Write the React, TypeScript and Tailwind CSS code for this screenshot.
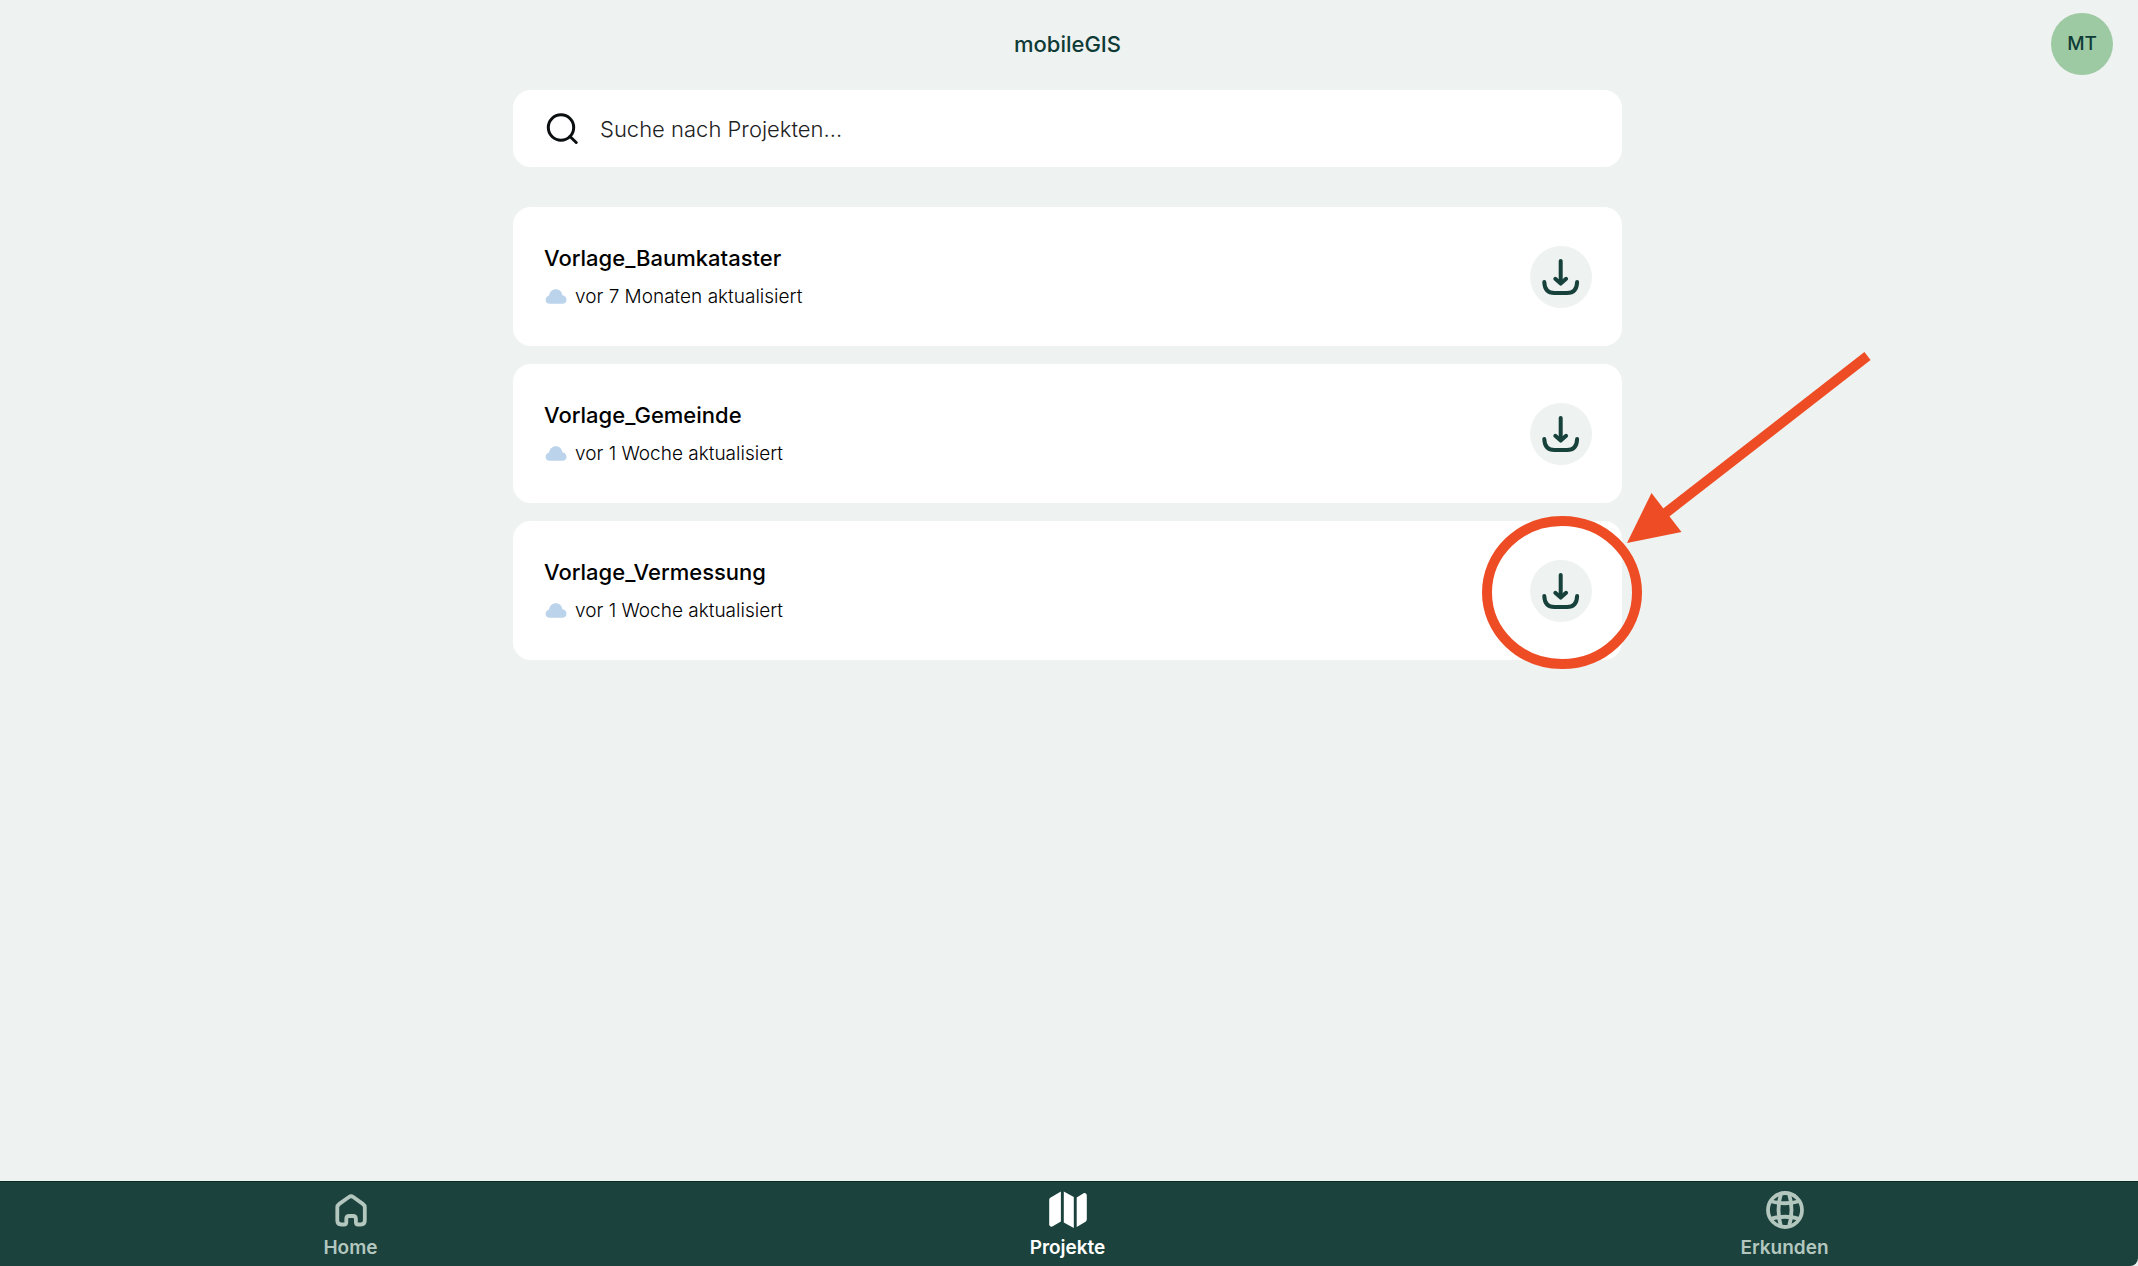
import React from "react";

type Project = { name: string; updated: string; highlighted?: boolean };

const projects: Project[] = [
  { name: "Vorlage_Baumkataster", updated: "vor 7 Monaten aktualisiert" },
  { name: "Vorlage_Gemeinde", updated: "vor 1 Woche aktualisiert" },
  { name: "Vorlage_Vermessung", updated: "vor 1 Woche aktualisiert", highlighted: true },
];

function SearchIcon() {
  return (
    <svg className="size-8 shrink-0" viewBox="0 0 32 32" fill="none" stroke="#0b0f10" strokeWidth="3" strokeLinecap="round" aria-hidden="true">
      <circle cx="15" cy="14.5" r="12.7" />
      <path d="M24 23.5 L30.2 29.5" />
    </svg>
  );
}

function CloudIcon() {
  return (
    <svg className="h-4 w-[23px] shrink-0" viewBox="-1 0 23 16" fill="#bbd3eb" aria-hidden="true">
      <path d="M4.8 14.8 C2.2 14.8 .6 13.2 .6 11 C.6 9 2 7.2 4 6.6 C4.8 2.6 7.3 .2 10.7 .2 C14 .2 16.7 2.2 17.4 6.2 C20 6.4 21.5 8.4 21.5 10.8 C21.5 13.2 19.8 14.8 17.2 14.8 Z" />
    </svg>
  );
}

function DownloadIcon() {
  return (
    <svg className="size-full" viewBox="0 0 62 62" fill="none" stroke="#17413b" strokeWidth="4" strokeLinecap="round" strokeLinejoin="round" aria-hidden="true">
      <path d="M30.7 15 V36" />
      <path d="M25.3 32.8 L30.7 37.6 L36.1 32.8" />
      <path d="M14.3 36 C14.5 43.5 18 47 24.5 47 H37 C43.5 47 46.9 43.5 47.1 36" />
    </svg>
  );
}

function HomeIcon() {
  return (
    <svg className="size-10" viewBox="0 0 40 40" fill="none" stroke="currentColor" strokeWidth="3.8" strokeLinejoin="round" aria-hidden="true">
      <path d="M6.3 17.6 C6.3 16 7 14.8 8.3 13.9 L18 7 C19.4 6 20.8 6 22.2 7 L31.8 13.9 C33.1 14.8 33.8 16 33.8 17.6 V30.5 C33.8 33 32.3 34.5 29.8 34.5 H27.2 C25.6 34.5 24.9 33.8 24.9 32.2 V28.8 C24.9 26.8 24 26 22 26 H18.2 C16.2 26 15.3 26.8 15.3 28.8 V32.2 C15.3 33.8 14.6 34.5 13 34.5 H10.3 C7.8 34.5 6.3 33 6.3 30.5 Z" />
    </svg>
  );
}

function MapIcon() {
  return (
    <svg className="size-10" viewBox="0 0 40 40" fill="currentColor" aria-hidden="true">
      <path d="M12.9 1.5 V31.5 L4.8 36.3 C3 37.2 1.2 36.3 1.2 34.2 V10 C1.2 8.8 1.7 8 2.7 7.4 Z" />
      <path d="M15.8 1.5 L25.8 7 V38 L15.8 32.6 Z" />
      <path d="M28.7 7.4 L35.2 3.4 C37 2.4 38.8 3.4 38.8 5.4 V29 C38.8 30.4 38.3 31.3 37.1 32 L28.7 37 Z" />
    </svg>
  );
}

function GlobeIcon() {
  return (
    <svg className="size-10" viewBox="0 0 40 40" fill="none" stroke="currentColor" strokeWidth="3.8" aria-hidden="true">
      <circle cx="20" cy="20" r="17" />
      <path d="M16 3.5 Q11 20 16 36.5 M24 3.5 Q29 20 24 36.5" />
      <path d="M5 11 Q20 15.5 35 11 M5 29 Q20 24.5 35 29" />
    </svg>
  );
}

/* Marker drawn over a download button: a ring with an arrow pointing to it. */
function Callout() {
  return (
    <svg className="pointer-events-none absolute -top-[212px] -left-[50px] z-10 h-[324px] w-[396px]" viewBox="0 0 396 324" fill="none" stroke="#ee4c24" strokeWidth="10" aria-hidden="true">
      <ellipse cx="82" cy="244.5" rx="75" ry="71.5" />
      <path d="M387.5 8 L185 165.5" />
      <path d="M147 195 L171.5 145 L201.5 184 Z" fill="#ee4c24" stroke="none" />
    </svg>
  );
}

function ProjectCard({ project }: { project: Project }) {
  return (
    <li className="flex items-center justify-between rounded-[18px] bg-white pt-9 pr-[30px] pb-[35px] pl-[31px]">
      <div>
        <h2 className="text-[22px] leading-[30px] font-medium text-black">{project.name}</h2>
        <p className="mt-[10px] flex items-center gap-2 text-[19px] leading-7 font-light text-black">
          <CloudIcon />
          {project.updated}
        </p>
      </div>
      <div className="relative">
        <button type="button" aria-label={`${project.name} herunterladen`} className="block size-[62px] rounded-full bg-[#eef2f1]">
          <DownloadIcon />
        </button>
        {project.highlighted && <Callout />}
      </div>
    </li>
  );
}

const tabs = [
  { label: "Home", Icon: HomeIcon, active: false },
  { label: "Projekte", Icon: MapIcon, active: true },
  { label: "Erkunden", Icon: GlobeIcon, active: false },
];

export default function App() {
  return (
    <div className="flex min-h-screen flex-col bg-[#eef2f1] font-['Inter',sans-serif]">
      <header className="grid grid-cols-[1fr_auto_1fr] items-center pt-[13px] pr-[25px] pb-[15px] pl-[22px]">
        <span />
        <h1 className="text-[22px] leading-[30px] font-medium text-[#0f3b36]">mobileGIS</h1>
        <button type="button" aria-label="Konto MT" className="size-[62px] justify-self-end rounded-full bg-[#9dc9a3] text-[19px] font-medium text-[#0f3b36]">
          MT
        </button>
      </header>

      <main className="flex grow flex-col items-center pr-[3px]">
        <div className="w-full max-w-[1109px]">
          <label className="flex h-[77px] items-center gap-[22px] rounded-[18px] bg-white px-[33px]">
            <SearchIcon />
            <input
              type="text"
              aria-label="Suche nach Projekten"
              placeholder="Suche nach Projekten..."
              className="min-w-0 grow bg-transparent text-[22px] leading-[30px] font-light text-black outline-none placeholder:text-[#1c2122]"
            />
          </label>
          <ul className="mt-10 flex flex-col gap-[18px]">
            {projects.map((project) => (
              <ProjectCard key={project.name} project={project} />
            ))}
          </ul>
        </div>
      </main>

      <nav className="grid grid-cols-3 gap-4 rounded-br-lg border-t border-[#0b2a22] bg-[#1b423d] pt-2 pr-[3px] pb-[2px]">
        {tabs.map(({ label, Icon, active }) => (
          <a
            key={label}
            href="#"
            aria-current={active ? "page" : undefined}
            className={`flex flex-col items-center gap-[2px] text-[19px] leading-8 font-semibold ${active ? "text-white" : "text-[#b3c7bf]"}`}
          >
            <Icon />
            {label}
          </a>
        ))}
      </nav>
    </div>
  );
}
